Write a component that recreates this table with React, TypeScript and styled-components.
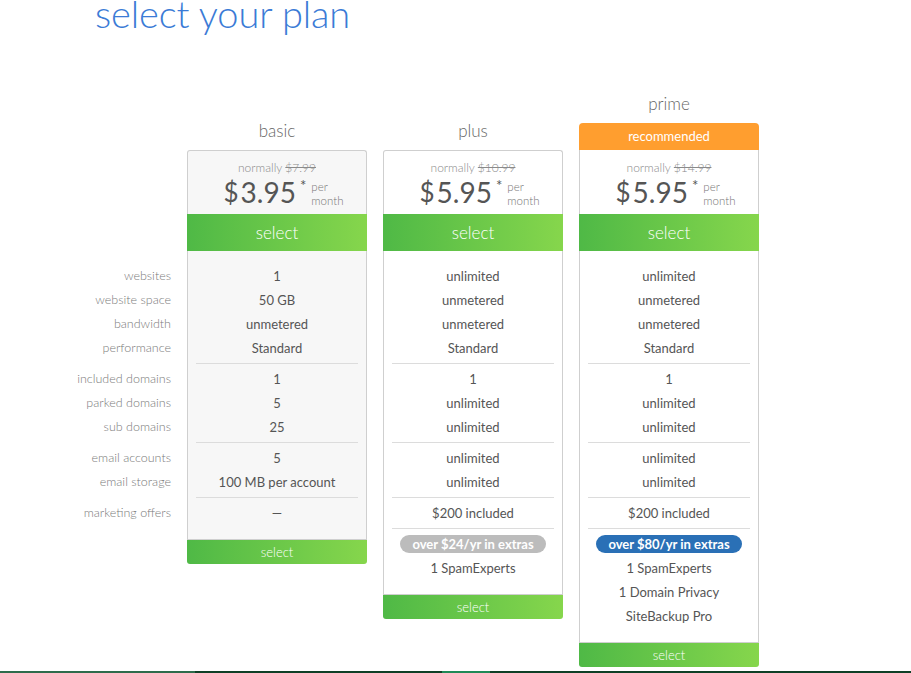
import React from "react";
import styled, { createGlobalStyle } from "styled-components";

const GlobalStyle = createGlobalStyle`
  html, body { margin: 0; padding: 0; background: #fff; }
  body { font-family: "Lato", "Open Sans", "Liberation Sans", sans-serif; }
  * { box-sizing: border-box; }
`;

const Page = styled.div`
  min-height: 100vh;
  display: flex;
  flex-direction: column;
`;

const Title = styled.h1`
  margin: -7px 0 0 95px;
  height: 40px;
  line-height: 40px;
  font-size: 38px;
  font-weight: 300;
  color: #3b7bd6;
  letter-spacing: -0.1px;
`;

const Columns = styled.div`
  margin-top: 57px;
  display: flex;
  align-items: flex-start;
  gap: 16px;
`;

const LabelColumn = styled.div`
  width: 171px;
  display: flex;
  flex-direction: column;
`;

const LabelSpacer = styled.div`
  height: 161px;
`;

const PlanColumn = styled.div`
  width: 180px;
  display: flex;
  flex-direction: column;
`;

const Head = styled.div`
  height: 60px;
  display: flex;
  flex-direction: column;
  justify-content: flex-end;
  align-items: stretch;
`;

const PlanName = styled.div`
  height: 22px;
  line-height: 22px;
  margin-bottom: 8px;
  text-align: center;
  font-size: 17px;
  font-weight: 300;
  color: #666;
`;

const Banner = styled.div`
  height: 27px;
  line-height: 27px;
  text-align: center;
  background: #ff9e2f;
  color: #fff;
  font-size: 13px;
  border-radius: 4px 4px 0 0;
`;

const PriceHeader = styled.div<{ $gray?: boolean; $topBorder?: boolean }>`
  height: 64px;
  padding-top: ${(p) => (p.$topBorder ? "8px" : "9px")};
  background: ${(p) => (p.$gray ? "#f7f7f7" : "#fff")};
  border: 1px solid #cfcfcf;
  border-top-width: ${(p) => (p.$topBorder ? "1px" : "0")};
  border-bottom: none;
  border-radius: ${(p) => (p.$topBorder ? "3px 3px 0 0" : "0")};
  display: flex;
  flex-direction: column;
  align-items: center;
`;

const Normally = styled.div`
  height: 18px;
  line-height: 18px;
  font-size: 12px;
  font-weight: 300;
  color: #8a8a8a;
  s { color: #8a8a8a; }
`;

const PriceLine = styled.div`
  display: flex;
  align-items: flex-start;
  height: 32px;
  margin-left: 13px;
`;

const Dollar = styled.span`
  font-size: 26px;
  line-height: 30px;
  color: #555;
  margin-right: 2px;
`;

const Amount = styled.span`
  font-size: 28px;
  line-height: 30px;
  color: #555;
`;

const Star = styled.span`
  font-size: 15px;
  line-height: 16px;
  color: #555;
  margin: 0 5px 0 4px;
`;

const PerMonth = styled.span`
  display: flex;
  flex-direction: column;
  font-size: 11.5px;
  line-height: 14px;
  color: #777;
  font-weight: 300;
  padding-top: 3px;
`;

const SelectButton = styled.button<{ $small?: boolean }>`
  display: block;
  width: 100%;
  height: ${(p) => (p.$small ? "24px" : "37px")};
  border: none;
  margin: 0;
  padding: 0 0 ${(p) => (p.$small ? "0" : "1px")};
  background: linear-gradient(to right, #4fb946, #86d64c);
  color: #fff;
  font-family: inherit;
  font-size: ${(p) => (p.$small ? "13px" : "17px")};
  font-weight: 300;
  border-radius: ${(p) => (p.$small ? "0 0 3px 3px" : "0")};
  cursor: pointer;
`;

const Body = styled.div<{ $gray?: boolean }>`
  background: ${(p) => (p.$gray ? "#f7f7f7" : "#fff")};
  border: 1px solid #cfcfcf;
  border-top: none;
  padding-bottom: 11px;
`;

const Section = styled.div<{ $first?: boolean; $label?: boolean }>`
  padding: ${(p) => (p.$first ? "13px 0 3px" : "3px 0")};
  margin: 0 ${(p) => (p.$label ? "0" : "8px")};
  border-top: ${(p) => (p.$first ? "none" : p.$label ? "1px solid transparent" : "1px solid #dcdcdc")};
`;

const Value = styled.div`
  height: 24px;
  line-height: 24px;
  text-align: center;
  font-size: 13px;
  color: #555;
`;

const Label = styled.div`
  height: 24px;
  line-height: 24px;
  text-align: right;
  font-size: 12.5px;
  font-weight: 300;
  color: #7a7a7a;
`;

const BadgeRow = styled.div`
  height: 24px;
  display: flex;
  align-items: center;
  justify-content: center;
`;

const Badge = styled.span<{ $tone: "gray" | "blue" }>`
  display: inline-block;
  height: 18px;
  line-height: 18px;
  padding: 0 12px;
  border-radius: 9px;
  background: ${(p) => (p.$tone === "blue" ? "#2a70b6" : "#bcbcbc")};
  color: #fff;
  font-size: 13px;
  font-weight: 700;
`;

const Strip = styled.div`
  margin-top: auto;
  height: 2px;
  display: flex;
`;

const StripPart = styled.div<{ $color: string; $w?: number }>`
  background: ${(p) => p.$color};
  ${(p) => (p.$w ? `width: ${p.$w}px;` : "flex: 1;")}
`;

type Plan = {
  name: string;
  normal: string;
  price: string;
  gray?: boolean;
  recommended?: boolean;
  features: string[][];
  extras?: { badge: string; tone: "gray" | "blue"; items: string[] };
};

const labels = [
  ["websites", "website space", "bandwidth", "performance"],
  ["included domains", "parked domains", "sub domains"],
  ["email accounts", "email storage"],
  ["marketing offers"],
];

const plans: Plan[] = [
  {
    name: "basic",
    normal: "$7.99",
    price: "3.95",
    gray: true,
    features: [
      ["1", "50 GB", "unmetered", "Standard"],
      ["1", "5", "25"],
      ["5", "100 MB per account"],
      ["—"],
    ],
  },
  {
    name: "plus",
    normal: "$10.99",
    price: "5.95",
    features: [
      ["unlimited", "unmetered", "unmetered", "Standard"],
      ["1", "unlimited", "unlimited"],
      ["unlimited", "unlimited"],
      ["$200 included"],
    ],
    extras: { badge: "over $24/yr in extras", tone: "gray", items: ["1 SpamExperts"] },
  },
  {
    name: "prime",
    normal: "$14.99",
    price: "5.95",
    recommended: true,
    features: [
      ["unlimited", "unmetered", "unmetered", "Standard"],
      ["1", "unlimited", "unlimited"],
      ["unlimited", "unlimited"],
      ["$200 included"],
    ],
    extras: {
      badge: "over $80/yr in extras",
      tone: "blue",
      items: ["1 SpamExperts", "1 Domain Privacy", "SiteBackup Pro"],
    },
  },
];

function PlanCard({ plan }: { plan: Plan }) {
  return (
    <PlanColumn>
      <Head>
        <PlanName>{plan.name}</PlanName>
        {plan.recommended && <Banner>recommended</Banner>}
      </Head>
      <PriceHeader $gray={plan.gray} $topBorder={!plan.recommended}>
        <Normally>
          normally <s>{plan.normal}</s>
        </Normally>
        <PriceLine>
          <Dollar>$</Dollar>
          <Amount>{plan.price}</Amount>
          <Star>*</Star>
          <PerMonth>
            <span>per</span>
            <span>month</span>
          </PerMonth>
        </PriceLine>
      </PriceHeader>
      <SelectButton>select</SelectButton>
      <Body $gray={plan.gray}>
        {plan.features.map((group, i) => (
          <Section key={i} $first={i === 0}>
            {group.map((v, j) => (
              <Value key={j}>{v}</Value>
            ))}
          </Section>
        ))}
        {plan.extras && (
          <Section>
            <BadgeRow>
              <Badge $tone={plan.extras.tone}>{plan.extras.badge}</Badge>
            </BadgeRow>
            {plan.extras.items.map((it) => (
              <Value key={it}>{it}</Value>
            ))}
          </Section>
        )}
      </Body>
      <SelectButton $small>select</SelectButton>
    </PlanColumn>
  );
}

export default function App() {
  return (
    <Page>
      <GlobalStyle />
      <Title>select your plan</Title>
      <Columns>
        <LabelColumn>
          <LabelSpacer />
          {labels.map((group, i) => (
            <Section key={i} $first={i === 0} $label>
              {group.map((l) => (
                <Label key={l}>{l}</Label>
              ))}
            </Section>
          ))}
        </LabelColumn>
        {plans.map((p) => (
          <PlanCard key={p.name} plan={p} />
        ))}
      </Columns>
      <Strip>
        <StripPart $color="#2e6b4c" $w={195} />
        <StripPart $color="#0f4027" $w={247} />
        <StripPart $color="#1f8a57" $w={48} />
        <StripPart $color="#0f4027" />
      </Strip>
    </Page>
  );
}
